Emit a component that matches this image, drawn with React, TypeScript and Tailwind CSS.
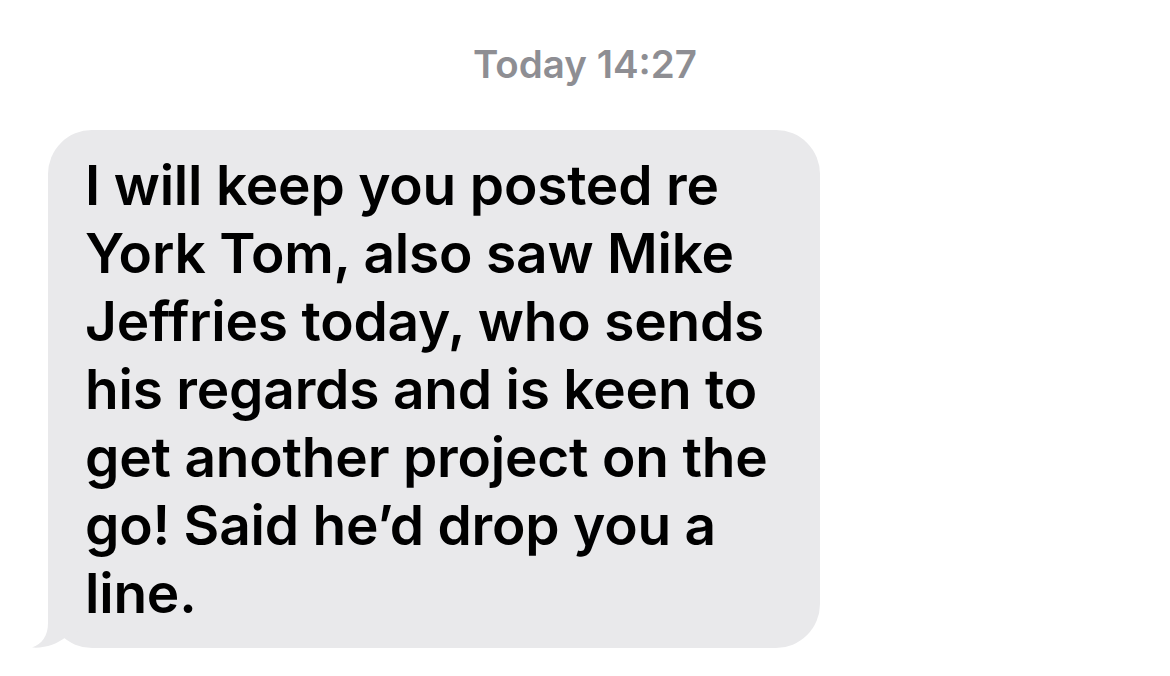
import React from 'react';

const lines = [
  'I will keep you posted re',
  'York Tom, also saw Mike',
  'Jeffries today, who sends',
  'his regards and is keen to',
  'get another project on the',
  'go! Said he\u2019d drop you a',
  'line.',
];

const Tail: React.FC = () => (
  <svg
    className="absolute left-[-16px] bottom-0"
    width="48"
    height="52"
    viewBox="0 0 48 52"
  >
    <path
      d="M16 0 L16 27 C16 40 10 48 0 51.5 C13 52.5 25 48 34 41 L48 34 L48 0 Z"
      fill="#e9e9eb"
    />
  </svg>
);

const App: React.FC = () => {
  return (
    <div className="min-h-screen w-full bg-white font-['Inter','Liberation_Sans',sans-serif] antialiased">
      <div className="pt-[41px] text-center text-[38.5px] leading-[46px] font-semibold text-[#8e8e93]">
        Today 14:27
      </div>

      <div className="mt-[43px] pl-[48px]">
        <div className="relative w-[772px] rounded-[44px] bg-[#e9e9eb] pl-[37px] pt-[21px] pb-[21px]">
          <Tail />
          <p className="relative text-[55px] leading-[68px] font-semibold tracking-[-0.2px] text-black">
            {lines.map((line, i) => (
              <span key={i} className="block whitespace-nowrap">
                {line}
              </span>
            ))}
          </p>
        </div>
      </div>
    </div>
  );
};

export default App;
